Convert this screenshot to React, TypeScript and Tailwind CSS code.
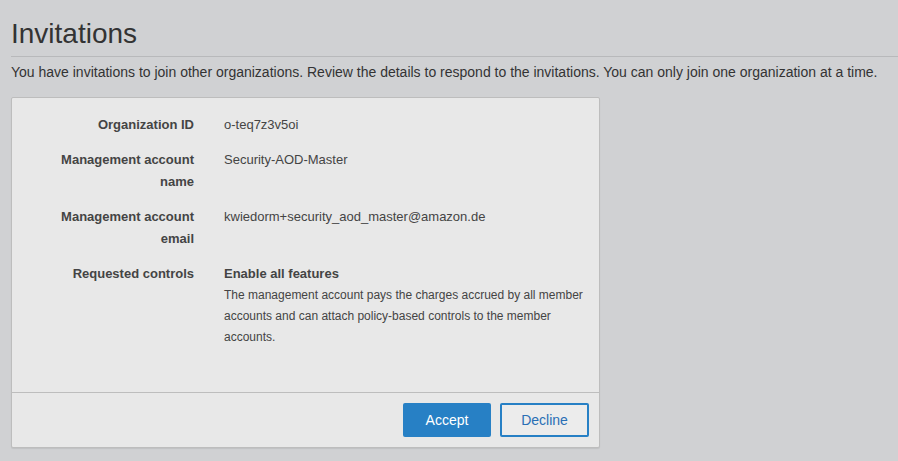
const rows: { label: string[]; value: string }[] = [
  { label: ['Organization ID'], value: 'o-teq7z3v5oi' },
  { label: ['Management account', 'name'], value: 'Security-AOD-Master' },
  { label: ['Management account', 'email'], value: 'kwiedorm+security_aod_master@amazon.de' }
];

export default function App() {
  return (
    <div className="min-h-[461px] w-[898px] bg-[#d0d1d3] px-[11px] font-['Liberation_Sans',Arial,sans-serif] text-[#444]">
      <h1 className="pt-[18px] pb-[6px] text-[28px] leading-[32px] text-[#333]">Invitations</h1>
      <div className="-mr-[11px] border-t border-[#b8b9bb]" />
      <p className="mt-[6px] whitespace-nowrap text-[14px] leading-[18px] text-[#333]">
        You have invitations to join other organizations. Review the details to respond to the invitations. You can only join one organization at a time.
      </p>

      <div className="mt-[16px] w-[589px] rounded-[2px] border border-[#bdbdbd] bg-[#e8e8e8] shadow-[0_1px_1px_rgba(0,0,0,0.08)]">
        <div className="flex flex-col gap-[13px] pt-[16px] pb-[44px] text-[13px] leading-[22px]">
          {rows.map((row) => (
            <div key={row.value} className="flex">
              <div className="w-[182px] shrink-0 text-right font-bold">
                {row.label.map((l) => (
                  <div key={l}>{l}</div>
                ))}
              </div>
              <div className="pl-[30px]">{row.value}</div>
            </div>
          ))}
          <div className="flex">
            <div className="w-[182px] shrink-0 text-right font-bold">Requested controls</div>
            <div className="w-[390px] pl-[30px]">
              <div className="font-bold">Enable all features</div>
              <div className="text-[12px] leading-[21px]">
                The management account pays the charges accrued by all member accounts and can attach policy-based controls to the member accounts.
              </div>
            </div>
          </div>
        </div>

        <div className="flex justify-end gap-[9px] border-t border-[#bdbdbd] px-[10px] py-[10px]">
          <button
            type="button"
            className="h-[34px] w-[88px] rounded-[2px] bg-[#2780c5] text-[14px] text-white"
          >
            Accept
          </button>
          <button
            type="button"
            className="h-[34px] w-[89px] rounded-[2px] border-2 border-[#2780c5] bg-[#ececec] text-[14px] text-[#2a6fb5]"
          >
            Decline
          </button>
        </div>
      </div>
    </div>
  );
}
